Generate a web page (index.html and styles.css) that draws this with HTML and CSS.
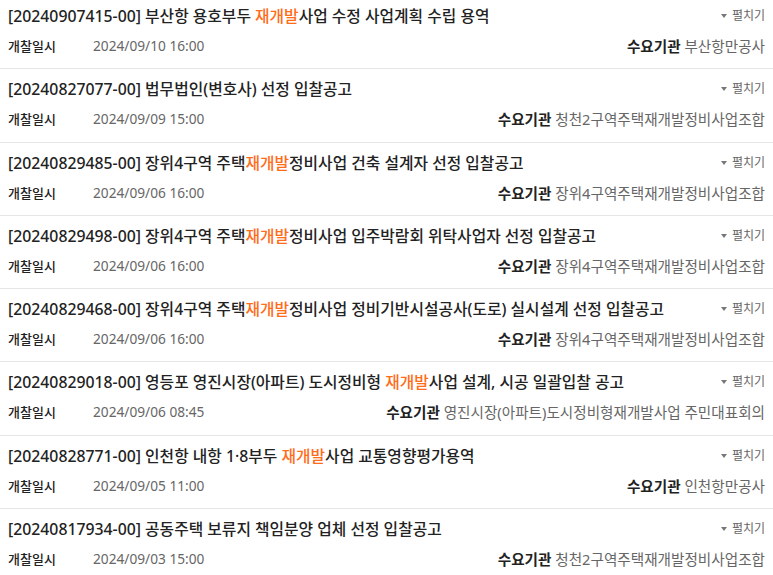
FILE: index.html
```html
<!DOCTYPE html>
<html lang="ko">
<head>
<meta charset="utf-8">
<title>입찰공고 목록</title>
<link rel="stylesheet" href="styles.css">
</head>
<body>
<ul class="list">
  <li class="item">
    <div class="head"><p class="title">[20240907415-00] 부산항 용호부두 <em class="hl">재개발</em>사업 수정 사업계획 수립 용역</p><span class="toggle"><span class="tri"></span>펼치기</span></div>
    <div class="meta"><div class="date"><span class="label">개찰일시</span><span class="val">2024/09/10 16:00</span></div><div class="org"><strong>수요기관</strong> <span class="val">부산항만공사</span></div></div>
  </li>
  <li class="item">
    <div class="head"><p class="title">[20240827077-00] 법무법인(변호사) 선정 입찰공고</p><span class="toggle"><span class="tri"></span>펼치기</span></div>
    <div class="meta"><div class="date"><span class="label">개찰일시</span><span class="val">2024/09/09 15:00</span></div><div class="org"><strong>수요기관</strong> <span class="val">청천2구역주택재개발정비사업조합</span></div></div>
  </li>
  <li class="item">
    <div class="head"><p class="title">[20240829485-00] 장위4구역 주택<em class="hl">재개발</em>정비사업 건축 설계자 선정 입찰공고</p><span class="toggle"><span class="tri"></span>펼치기</span></div>
    <div class="meta"><div class="date"><span class="label">개찰일시</span><span class="val">2024/09/06 16:00</span></div><div class="org"><strong>수요기관</strong> <span class="val">장위4구역주택재개발정비사업조합</span></div></div>
  </li>
  <li class="item">
    <div class="head"><p class="title">[20240829498-00] 장위4구역 주택<em class="hl">재개발</em>정비사업 입주박람회 위탁사업자 선정 입찰공고</p><span class="toggle"><span class="tri"></span>펼치기</span></div>
    <div class="meta"><div class="date"><span class="label">개찰일시</span><span class="val">2024/09/06 16:00</span></div><div class="org"><strong>수요기관</strong> <span class="val">장위4구역주택재개발정비사업조합</span></div></div>
  </li>
  <li class="item">
    <div class="head"><p class="title">[20240829468-00] 장위4구역 주택<em class="hl">재개발</em>정비사업 정비기반시설공사(도로) 실시설계 선정 입찰공고</p><span class="toggle"><span class="tri"></span>펼치기</span></div>
    <div class="meta"><div class="date"><span class="label">개찰일시</span><span class="val">2024/09/06 16:00</span></div><div class="org"><strong>수요기관</strong> <span class="val">장위4구역주택재개발정비사업조합</span></div></div>
  </li>
  <li class="item">
    <div class="head"><p class="title">[20240829018-00] 영등포 영진시장(아파트) 도시정비형 <em class="hl">재개발</em>사업 설계, 시공 일괄입찰 공고</p><span class="toggle"><span class="tri"></span>펼치기</span></div>
    <div class="meta"><div class="date"><span class="label">개찰일시</span><span class="val">2024/09/06 08:45</span></div><div class="org"><strong>수요기관</strong> <span class="val">영진시장(아파트)도시정비형재개발사업 주민대표회의</span></div></div>
  </li>
  <li class="item">
    <div class="head"><p class="title">[20240828771-00] 인천항 내항 1·8부두 <em class="hl">재개발</em>사업 교통영향평가용역</p><span class="toggle"><span class="tri"></span>펼치기</span></div>
    <div class="meta"><div class="date"><span class="label">개찰일시</span><span class="val">2024/09/05 11:00</span></div><div class="org"><strong>수요기관</strong> <span class="val">인천항만공사</span></div></div>
  </li>
  <li class="item">
    <div class="head"><p class="title">[20240817934-00] 공동주택 보류지 책임분양 업체 선정 입찰공고</p><span class="toggle"><span class="tri"></span>펼치기</span></div>
    <div class="meta"><div class="date"><span class="label">개찰일시</span><span class="val">2024/09/03 15:00</span></div><div class="org"><strong>수요기관</strong> <span class="val">청천2구역주택재개발정비사업조합</span></div></div>
  </li>
</ul>
</body>
</html>
```

FILE: styles.css
```css
html, body {
  margin: 0;
  padding: 0;
  background: #fff;
}
body {
  font-family: "Noto Sans", "Noto Sans CJK KR", sans-serif;
  color: #222;
}
.list {
  list-style: none;
  margin: -4px 0 0;
  padding: 0;
}
.item {
  padding: 9px 8px 12.25px;
  border-bottom: 1px solid #e6e6e6;
}
.head {
  display: flex;
  align-items: center;
  justify-content: space-between;
  height: 22px;
}
.title {
  margin: 0;
  font-size: 15.8px;
  line-height: 22px;
  font-weight: 500;
  color: #222;
  white-space: nowrap;
}
.hl {
  font-style: normal;
  color: #ff6c1a;
}
.toggle {
  display: flex;
  align-items: center;
  gap: 5px;
  font-size: 12px;
  color: #666;
  line-height: 22px;
}
.tri {
  width: 0;
  height: 0;
  border-left: 3.5px solid transparent;
  border-right: 3.5px solid transparent;
  border-top: 4px solid #777;
}
.meta {
  margin-top: 9px;
  display: flex;
  align-items: center;
  justify-content: space-between;
  height: 20px;
  font-size: 13.7px;
  line-height: 20px;
}
.date {
  display: flex;
}
.label {
  width: 85px;
  font-size: 13px;
  font-weight: 500;
  color: #222;
}
.val {
  color: #666;
}
.org {
  font-size: 14.6px;
}
.org strong {
  font-weight: 700;
  color: #222;
}
```
